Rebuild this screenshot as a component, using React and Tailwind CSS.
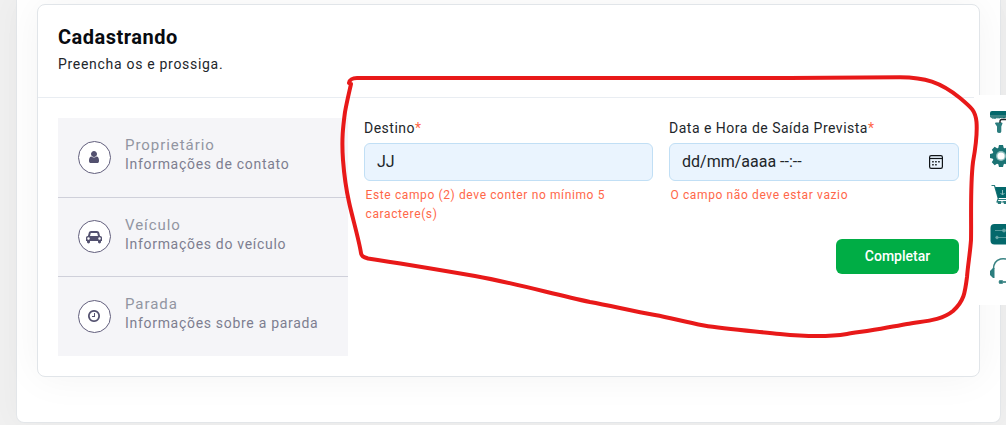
const UserGlyph = () => (
  <svg viewBox="0 0 1792 1792" className="mr-px size-3.5 fill-[#53516f]">
    <path d="M1536 1399q0 109-62.5 187t-150.5 78h-854q-88 0-150.5-78t-62.5-187q0-85 8.5-160.5t31.5-152 58.5-131 94-89 134.5-34.5q131 128 313 128t313-128q76 0 134.5 34.5t94 89 58.5 131 31.5 152 8.5 160.5zm-256-887q0 159-112.5 271.5t-271.5 112.5-271.5-112.5-112.5-271.5 112.5-271.5 271.5-112.5 271.5 112.5 112.5 271.5z" />
  </svg>
);

const CarGlyph = () => (
  <svg viewBox="0 0 2048 1792" className="mr-px h-3.5 w-4 fill-[#53516f]">
    <path d="M480 1088q0-66-47-113t-113-47-113 47-47 113 47 113 113 47 113-47 47-113zm36-320h1016l-89-357q-2-8-14-17.5t-21-9.5h-768q-9 0-21 9.5t-14 17.5zm1372 320q0-66-47-113t-113-47-113 47-47 113 47 113 113 47 113-47 47-113zm160-96v384q0 14-9 23t-23 9h-96v128q0 80-56 136t-136 56-136-56-56-136v-128h-1024v128q0 80-56 136t-136 56-136-56-56-136v-128h-96q-14 0-23-9t-9-23v-384q0-93 65.5-158.5t158.5-65.5h28l105-419q23-94 104-157.5t179-63.5h768q98 0 179 63.5t104 157.5l105 419h28q93 0 158.5 65.5t65.5 158.5z" />
  </svg>
);

const ClockGlyph = () => (
  <svg viewBox="0 0 1792 1792" className="mr-px size-3.5 fill-[#53516f]">
    <path d="M1024 544v448q0 14-9 23t-23 9h-320q-14 0-23-9t-9-23v-64q0-14 9-23t23-9h224v-352q0-14 9-23t23-9h64q14 0 23 9t9 23zm416 352q0-148-73-273t-198-198-273-73-273 73-198 198-73 273 73 273 198 198 273 73 273-73 198-198 73-273zm224 0q0 209-103 385.5t-279.5 279.5-385.5 103-385.5-103-279.5-279.5-103-385.5 103-385.5 279.5-279.5 385.5-103 385.5 103 279.5 279.5 103 385.5z" />
  </svg>
);

const CalendarGlyph = () => (
  <svg viewBox="0 0 14 14" className="size-3.5">
    <rect x="0.6" y="0.6" width="12.8" height="12.8" rx="1.6" fill="none" stroke="#101418" strokeWidth="1.2" />
    <path d="M0.6 3.5h12.8" stroke="#101418" strokeWidth="1.2" />
    <path d="M6.2 6h1.500v1.500H6.200zM9.200 6h1.500v1.500H9.200zM3.200 6h1.500v1.500H3.200zM3.200 9h1.500v1.500H3.200zM6.200 9h1.500v1.500H6.200z" fill="#101418" />
  </svg>
);

const steps = [
  { title: "Proprietário", text: "Informações de contato", Icon: UserGlyph },
  { title: "Veículo", text: "Informações do veículo", Icon: CarGlyph },
  { title: "Parada", text: "Informações sobre a parada", Icon: ClockGlyph },
];

function Steps() {
  return (
    <div className="grid h-[238px] w-[290px] shrink-0 grid-rows-[80px_79px_79px] divide-y divide-[#cfd0da] bg-[#f5f5f8]">
      {steps.map(({ title, text, Icon }) => (
        <div key={title} className="flex items-center gap-[14px] pl-5">
          <div className="mb-px flex size-[33px] shrink-0 items-center justify-center rounded-full border border-[#625f7d] bg-white">
            <Icon />
          </div>
          <div className="-mt-[5px]">
            <div className="text-[15px] leading-[19px] tracking-[0.95px] text-[#9295a2]">{title}</div>
            <div className="text-sm leading-[19px] tracking-[0.7px] text-[#7d7e90]">{text}</div>
          </div>
        </div>
      ))}
    </div>
  );
}

function Field({ label, value, error, icon }) {
  return (
    <div>
      <div className="text-sm leading-5 tracking-[0.5px] text-[#22262b]">
        {label}<span className="text-[#ff6749]">*</span>
      </div>
      <div className="mt-[5px] flex h-[38px] items-center justify-between rounded-md border border-[#c1dff5] bg-[#eaf4fe] pr-[15px] pl-3 text-base text-[#212529]">
        <span>{value}</span>
        {icon}
      </div>
      <div className="mt-[5px] pr-5 pl-[1.5px] text-xs leading-[19px] tracking-[0.62px] text-[#ff6749]">{error}</div>
    </div>
  );
}

function Toolbar() {
  return (
    <div className="absolute top-[95px] left-[974px] h-[210px] w-8 overflow-hidden bg-white">
      <svg viewBox="0 0 32 210" className="h-[210px] w-8">
        <path d="M16 18q0-2 2-2h16v7l-2-1-2 1.500-2-1-3 1-2-1-2 1.500-3-2-2-1z" fill="#04686b" />
        <path d="M16 20h16v3l-2-1-2 1.500-2-1-3 1-2-1-2 1.500-3-2z" fill="#398383" />
        <path d="M21 28.500q0-1 1-1h5.500q1 0 1 1l-1.200 3v5q0 1.500-2 1.500t-2.300-1.500v-5z" fill="#2b7d7e" />
        <path d="M26 28v-1.500q0-2 2-2h6" fill="none" stroke="#202529" strokeWidth="1.4" />
        <g transform="translate(27 61)" fill="#1b7374">
          <circle r="8.6" />
          <path d="M-2-11h4l1 4h-6zM-2 11h4l1-4h-6zM-11-2v4l4 1v-6z" />
          <path d="M-2-11h4l1 4h-6zM-2 11h4l1-4h-6z" transform="rotate(45)" />
          <path d="M-2-11h4l1 4h-6zM-2 11h4l1-4h-6z" transform="rotate(-45)" />
          <circle r="5" fill="#8abdbd" />
          <circle r="3.6" fill="white" />
        </g>
        <path d="M17.500 90.500h3l4 14h10M24 104l-1 3h11" fill="none" stroke="#2b7d7e" strokeWidth="1.200" />
        <path d="M21 92h13v11H24z" fill="#04686b" />
        <path d="M28.500 95v5m-2-2 2 2 2-2" fill="none" stroke="#8abdbd" />
        <path d="M23 106h4v3h-3zM29 106h5v3h-4z" fill="#2b7d7e" />
        <rect x="16.500" y="129" width="22" height="20.500" rx="4" fill="#04686b" />
        <g stroke="#6ba8a8" fill="#6ba8a8" strokeWidth=".8">
          <path d="M21 135.500h8M23 142.500h11" />
          <circle cx="30" cy="135.500" r="1.500" />
          <circle cx="23" cy="142.500" r="1.300" />
        </g>
        <path d="M19.500 174q0-8 7-10 4-1 8 1" fill="none" stroke="#398383" strokeWidth="1.500" />
        <path d="M20.500 173v10h-1.500l-3-3v-4l3-3z" fill="#2b7d7e" />
        <path d="M25.500 185.500h3v1h5v1h-5v1h-3q-1-1.500 0-3z" fill="#2b7d7e" stroke="#398383" strokeWidth=".7" />
      </svg>
    </div>
  );
}

function Marker() {
  return (
    <svg viewBox="0 0 1006 425" className="pointer-events-none absolute inset-0 h-[425px] w-[1006px]">
      <path
        d="M349 83C350 79 352 78 357 78H790C835 78 872 77.300 900 77.300C925 77.500 940 82 960 98C972 108 975.500 111 976.500 122C977.500 135 975 151 973 162C970 187 971.500 218 971 240C970 254 968 264 967 277C965 293 964 301 953 311C941 321 923 321 907 324C887 328 866 331 847 334C825 337.500 805 336.500 780 334C752 331 725 329 704 325.500C684 322 672 318 655 315C632 311 612 306 590 302C552 294 519 284 475 276C440 270 405 264 368 258.500C363 257 361.500 256 361 253C359 240 352 216 349 202C345 184 344 173 343 160C341.500 139 343 127 345 112C347 101 349 93 351 84"
        fill="none"
        stroke="#e81919"
        strokeWidth="4"
        strokeLinecap="round"
        strokeLinejoin="round"
      />
    </svg>
  );
}

export default function App() {
  return (
    <div className="relative h-[425px] w-[1006px] overflow-hidden bg-[#f0f0f0] font-['Roboto','Liberation_Sans',sans-serif]">
      <div className="ml-4 h-[423px] w-[985px] rounded-b-lg border border-t-0 border-[#e3e6e9] bg-white px-5 pt-1 shadow-[0_0_30px_rgba(0,0,0,0.035)]">
        <div className="h-[373px] w-[943px] rounded-lg border border-[#e1e5e9] bg-white shadow-[0_0_40px_rgba(0,0,0,0.05)]">
          <div className="h-[93px] border-b border-[#e9edf2] px-5 pt-5">
            <h1 className="text-xl leading-6 font-bold tracking-[0.5px] text-[#080b10]">Cadastrando</h1>
            <p className="mt-[5px] text-sm leading-5 tracking-[0.7px] text-[#22262b]">Preencha os e prossiga.</p>
          </div>
          <div className="flex gap-4 px-5 pt-5">
            <Steps />
            <div className="flex flex-1 flex-col items-end">
              <div className="grid h-[121px] w-full grid-cols-[289px_290px] gap-4">
                <Field label="Destino" value="JJ" error="Este campo (2) deve conter no mínimo 5 caractere(s)" />
                <Field label="Data e Hora de Saída Prevista" value="dd/mm/aaaa --:--" error="O campo não deve estar vazio" icon={<CalendarGlyph />} />
              </div>
              <button className="h-[35px] w-[123px] rounded-md bg-[#00ad45] pb-0.5 text-sm font-medium text-white">Completar</button>
            </div>
          </div>
        </div>
      </div>
      <Toolbar />
      <Marker />
    </div>
  );
}
